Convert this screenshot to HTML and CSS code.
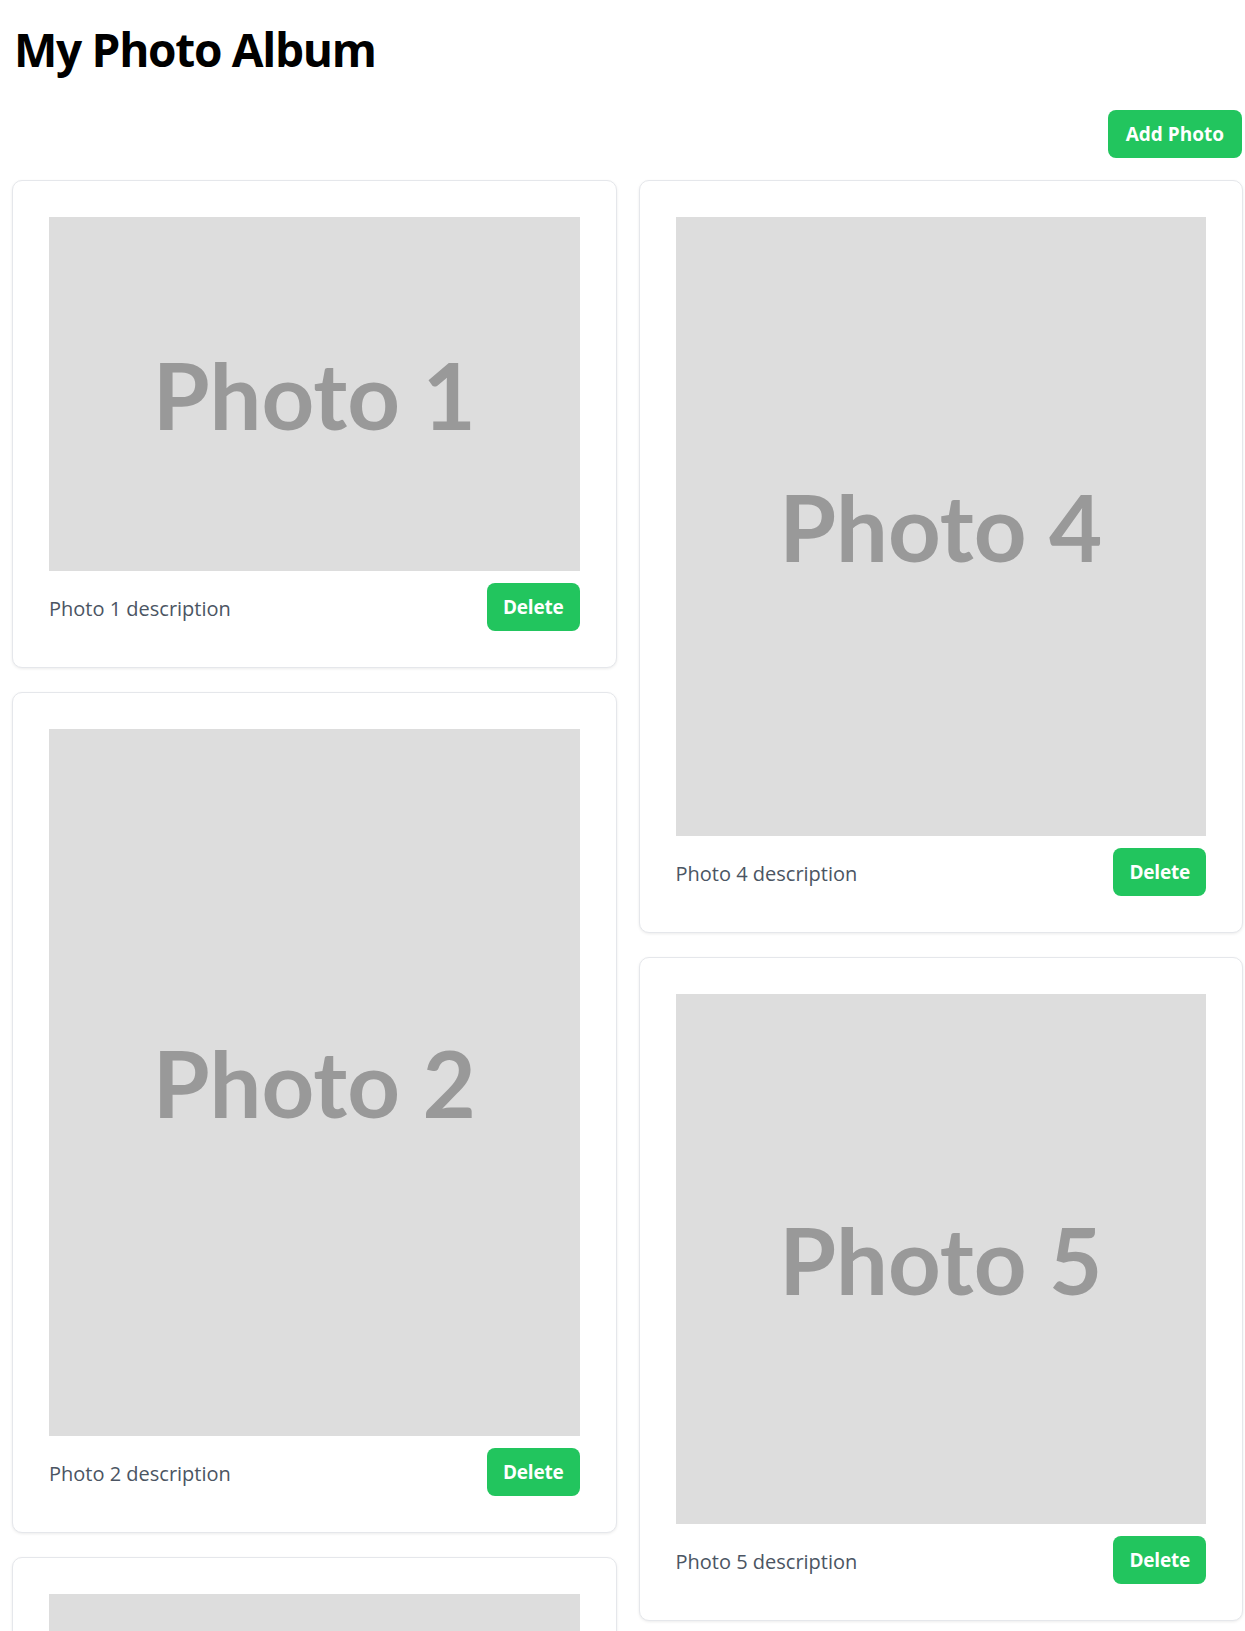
FILE: index.html
```html
<!DOCTYPE html>
<html lang="en">
<head>
<meta charset="utf-8">
<title>My Photo Album</title>
<link rel="stylesheet" href="styles.css">
</head>
<body>
<div class="page">
  <header class="header">
    <h1 class="title">My Photo Album</h1>
  </header>
  <div class="toolbar">
    <button class="btn btn-add">Add Photo</button>
  </div>
  <div class="grid">
    <div class="col">
      <div class="card">
        <div class="photo ratio-3-2"><span>Photo 1</span></div>
        <div class="card-footer">
          <p class="desc">Photo 1 description</p>
          <button class="btn">Delete</button>
        </div>
      </div>
      <div class="card">
        <div class="photo ratio-3-4"><span>Photo 2</span></div>
        <div class="card-footer">
          <p class="desc">Photo 2 description</p>
          <button class="btn">Delete</button>
        </div>
      </div>
      <div class="card">
        <div class="photo ratio-3-2"><span>Photo 3</span></div>
        <div class="card-footer">
          <p class="desc">Photo 3 description</p>
          <button class="btn">Delete</button>
        </div>
      </div>
    </div>
    <div class="col">
      <div class="card">
        <div class="photo ratio-6-7"><span>Photo 4</span></div>
        <div class="card-footer">
          <p class="desc">Photo 4 description</p>
          <button class="btn">Delete</button>
        </div>
      </div>
      <div class="card">
        <div class="photo ratio-1-1"><span>Photo 5</span></div>
        <div class="card-footer">
          <p class="desc">Photo 5 description</p>
          <button class="btn">Delete</button>
        </div>
      </div>
    </div>
  </div>
</div>
</body>
</html>
```

FILE: styles.css
```css
* { box-sizing: border-box; }

html, body {
  margin: 0;
  background: #ffffff;
}

body {
  font-family: "Open Sans", "Noto Sans", "Liberation Sans", sans-serif;
  color: #000;
}

.page {
  padding: 0 2px 40px 12px;
}

.header {
  padding-top: 21px;
}

.title {
  margin: 0;
  font-size: 46px;
  line-height: 57px;
  font-weight: 700;
  letter-spacing: -1.3px;
  padding-left: 2px;
}

.toolbar {
  margin-top: 32px;
  display: flex;
  justify-content: flex-end;
  padding-right: 1px;
}

.btn {
  font-family: "Open Sans", "Noto Sans", sans-serif;
  font-size: 19px;
  font-weight: 700;
  line-height: 28px;
  height: 48px;
  padding: 10px 16px;
  color: #ffffff;
  background: #22c55e;
  border: none;
  border-radius: 8px;
  letter-spacing: -0.2px;
}

.btn-add {
  padding: 10px 18px;
  letter-spacing: 0;
}

.grid {
  margin-top: 22px;
  display: flex;
  gap: 22px;
  align-items: flex-start;
}

.col {
  flex: 1 1 0;
  min-width: 0;
  display: flex;
  flex-direction: column;
  gap: 24px;
}

.card {
  background: #ffffff;
  border: 1px solid #e5e7eb;
  border-radius: 10px;
  box-shadow: 0 1px 3px rgba(0, 0, 0, 0.08);
  padding: 36px;
}

.photo {
  width: 100%;
  background: #dddddd;
  display: flex;
  align-items: center;
  justify-content: center;
}

.photo span {
  font-family: Lato, "Open Sans", sans-serif;
  font-weight: 700;
  font-size: 92px;
  line-height: 1;
  color: #999999;
  padding-top: 2px;
}

.ratio-3-2 { aspect-ratio: 3 / 2; }
.ratio-3-4 { aspect-ratio: 3 / 4; }
.ratio-6-7 { aspect-ratio: 6 / 7; }
.ratio-1-1 { aspect-ratio: 1 / 1; }

.card-footer {
  margin-top: 12px;
  display: flex;
  align-items: center;
  justify-content: space-between;
}

.desc {
  margin: 0;
  padding-top: 3px;
  font-size: 20px;
  color: #4b5563;
  letter-spacing: 0;
}
```
